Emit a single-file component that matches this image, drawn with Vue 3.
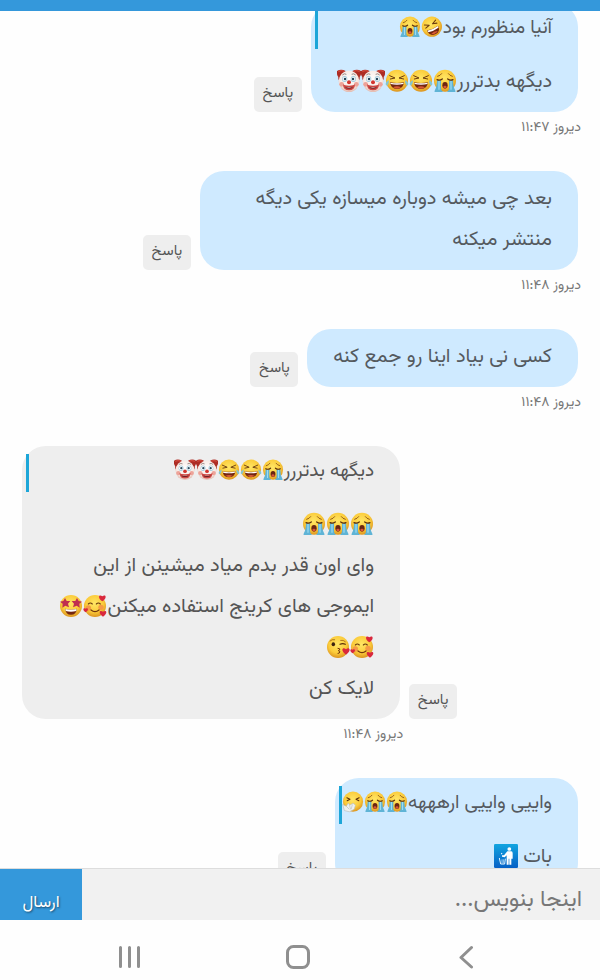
<script setup>
const messages = [
  {
    id: 1,
    mine: true,
    quote: { text: 'آنیا منظورم بود', emojis: ['rofl', 'sob'] },
    lines: [{ text: 'دیگهه بدتررر', emojis: ['sob', 'joy', 'joy', 'clown', 'clown'] }],
    time: 'دیروز ۱۱:۴۷'
  },
  {
    id: 2,
    mine: true,
    lines: [{ text: 'بعد چی میشه دوباره میسازه یکی دیگه منتشر میکنه' }],
    time: 'دیروز ۱۱:۴۸'
  },
  {
    id: 3,
    mine: true,
    lines: [{ text: 'کسی نی بیاد اینا رو جمع کنه' }],
    time: 'دیروز ۱۱:۴۸'
  },
  {
    id: 4,
    mine: false,
    quote: { text: 'دیگهه بدتررر', emojis: ['sob', 'joy', 'joy', 'clown', 'clown'] },
    lines: [
      { text: '', emojis: ['sob', 'sob', 'sob'] },
      {
        text: 'وای اون قدر بدم میاد میشینن از این ایموجی های کرینج استفاده میکنن',
        emojis: ['hearts', 'star', 'hearts', 'kiss']
      },
      { text: 'لایک کن' }
    ],
    time: 'دیروز ۱۱:۴۸'
  },
  {
    id: 5,
    mine: true,
    quote: { text: 'واییی واییی ارهههه', emojis: ['sob', 'sob', 'sneeze'] },
    lines: [{ text: 'بات ', emojis: ['litter'] }],
    time: 'دیروز ۱۱:۴۸'
  }
]

const labels = {
  rofl: '🤣',
  sob: '😭',
  joy: '😂',
  clown: '🤡',
  hearts: '🥰',
  star: '🤩',
  kiss: '😘',
  sneeze: '🤧',
  litter: '🚮'
}
</script>

<template>
  <div class="chat">
    <svg class="sprite" aria-hidden="true">
      <defs>
        <radialGradient id="skin" cx="0.48" cy="0.38" r="0.66">
          <stop offset="0" stop-color="#ffe665" />
          <stop offset="0.6" stop-color="#fbcb3a" />
          <stop offset="1" stop-color="#d68a1c" />
        </radialGradient>
        <radialGradient id="pale" cx="0.5" cy="0.4" r="0.65">
          <stop offset="0" stop-color="#ffffff" />
          <stop offset="0.7" stop-color="#f7e8e2" />
          <stop offset="1" stop-color="#dba99c" />
        </radialGradient>
        <linearGradient id="sign" x1="0" y1="0" x2="0" y2="1">
          <stop offset="0" stop-color="#12a5e0" />
          <stop offset="1" stop-color="#0560c6" />
        </linearGradient>
        <path id="heart" d="M0 5C-8-.5-5-6 0-2.500 5-6 8-.5 0 5z" fill="#d9283c" />
      </defs>

      <symbol id="sob" viewBox="0 0 36 36">
        <circle cx="18" cy="17.500" r="16.500" fill="url(#skin)" />
        <path d="M7 11q4-1 6-4M29 11q-4-1-6-4" fill="none" stroke="#8a5216" stroke-width="1.400" stroke-linecap="round" />
        <path d="M6 17h6v12q0 3 3 5.500H4q-3 0-1-3 3-5 3-14.500zM30 17h-6v12q0 3-3 5.500h11q3 0 1-3-3-5-3-14.500z" fill="#5fb4d6" />
        <path d="M9 18v13M27 18v13" stroke="#9fdcf0" stroke-width="1.800" />
        <path d="M6 16q4 2 8-1M30 16q-4 2-8-1" fill="none" stroke="#5c300b" stroke-width="1.900" stroke-linecap="round" />
        <ellipse cx="18" cy="24.500" rx="4" ry="5" fill="#6b2612" />
        <ellipse cx="18" cy="27" rx="2.500" ry="2" fill="#d9553c" />
      </symbol>

      <symbol id="joy" viewBox="0 0 36 36">
        <circle cx="18" cy="17.500" r="16.500" fill="url(#skin)" />
        <path d="M7 10l8 3.500-7 1.500M29 10l-8 3.500 7 1.500" fill="none" stroke="#6b3b0f" stroke-width="1.500" stroke-linecap="round" stroke-linejoin="round" />
        <path d="M7.500 20q10.500 2 21 0-1 10-10.500 10T7.500 20z" fill="#74260f" />
        <path d="M8 20.500q10 2 20 0l-.5 2q-9.500 2-19 0z" fill="#fff" />
        <path d="M12 27.500q6-3 12 0-6 4-12 0z" fill="#d95a37" />
        <path d="M6 17q-5 2-5 6 1 3 3 1 2-2 2-7zM30 17q5 2 5 6-1 3-3 1-2-2-2-7z" fill="#86c5cf" />
      </symbol>

      <symbol id="rofl" viewBox="0 0 36 36">
        <g transform="rotate(-24 18 18)">
          <circle cx="18" cy="17.500" r="16.500" fill="url(#skin)" />
          <path d="M8 10l7 3.500-7 2M28 10l-7 3.500 7 2" fill="none" stroke="#6b3b0f" stroke-width="1.700" stroke-linecap="round" stroke-linejoin="round" />
          <path d="M8 20q10 2 20 0 0 11-10 11T8 20z" fill="#74260f" />
          <path d="M8.500 20.500q9.500 2 19 0l-.5 3q-9 2-18 0z" fill="#fff" />
          <path d="M12 28q6-3 12 0-6 4-12 0z" fill="#d95a37" />
        </g>
      </symbol>

      <symbol id="clown" viewBox="0 0 36 36">
        <path d="M0 3q6-4 13 0L8 19q-7 0-6-7-3-4-2-9zM36 3q-6-4-13 0l5 16q7 0 6-7 3-4 2-9z" fill="#ad2c24" />
        <path d="M2 4q5-3 9 0M34 4q-5-3-9 0" stroke="#d0473b" stroke-width="2" fill="none" />
        <ellipse cx="18" cy="18.500" rx="15.500" ry="16" fill="url(#pale)" />
        <circle cx="7" cy="23" r="3.500" fill="#eda399" />
        <circle cx="29" cy="23" r="3.500" fill="#eda399" />
        <path d="M8 9q3-3 6-1M28 9q-3-3-6-1" fill="none" stroke="#7e6b68" stroke-width="1.200" />
        <ellipse cx="11.500" cy="15" rx="4" ry="4.500" fill="#a3cde0" />
        <ellipse cx="24.500" cy="15" rx="4" ry="4.500" fill="#a3cde0" />
        <circle cx="11.500" cy="15" r="3" fill="#fff" />
        <circle cx="24.500" cy="15" r="3" fill="#fff" />
        <circle cx="12" cy="15" r="1.900" fill="#29495d" />
        <circle cx="24" cy="15" r="1.900" fill="#29495d" />
        <circle cx="18" cy="20" r="3" fill="#d2352f" />
        <path d="M9 23q2 2 9 2t9-2q0 9-9 9T9 23z" fill="#cc4743" />
        <path d="M12 26.500q6 2 12 0-1 3-6 3t-6-3z" fill="#6b2023" />
        <path d="M13 27q5 1 10 0-5 2-10 0z" fill="#fff" />
      </symbol>

      <symbol id="hearts" viewBox="0 0 36 36">
        <circle cx="18" cy="18" r="16.500" fill="url(#skin)" />
        <circle cx="8" cy="21" r="4" fill="#f59a45" />
        <circle cx="27" cy="20" r="4" fill="#f59a45" />
        <path d="M8 15q3-3 6 0M20 15q3-3 6 0" fill="none" stroke="#6b3b0f" stroke-width="1.600" stroke-linecap="round" />
        <path d="M12 24q6 5 12 0" fill="none" stroke="#70340d" stroke-width="1.800" stroke-linecap="round" />
        <use href="#heart" transform="translate(29 6)" />
        <use href="#heart" transform="translate(4 24) scale(0.700)" />
        <use href="#heart" transform="translate(30 29)" />
      </symbol>

      <symbol id="star" viewBox="0 0 36 36">
        <circle cx="18" cy="18" r="16.500" fill="url(#skin)" />
        <path d="M9 22q9 3 18 0-1 9-9 9T9 22z" fill="#74260f" />
        <path d="M9.500 22.500q8.500 2 17 0l-.5 3q-8 2-16 0z" fill="#fff" />
        <path d="M9 6l2.500 4.500 5.500 0-3.500 4 1.500 5.500-5.500-2.500-4.500 3 .5-6-4-3 5-1zM27 6l-2.500 4.500-5.500 0 3.500 4-1.500 5.500 5.500-2.500 4.500 3-.5-6 4-3-5-1z" fill="#bf2f50" />
      </symbol>

      <symbol id="kiss" viewBox="0 0 36 36">
        <circle cx="18" cy="18" r="16.500" fill="url(#skin)" />
        <path d="M6 9q3-3 7-2M22 8q4-1 7 2" fill="none" stroke="#a4661a" stroke-width="1.300" stroke-linecap="round" />
        <ellipse cx="11" cy="14" rx="2.600" ry="3" fill="#3d2310" />
        <path d="M21 14q4-2 8 0" fill="none" stroke="#5c300b" stroke-width="1.700" stroke-linecap="round" />
        <path d="M18 20q4 0 2.500 2.500l-2 1q4 1 1.500 3.500l-2 .5" fill="none" stroke="#70340d" stroke-width="1.500" stroke-linecap="round" />
        <use href="#heart" transform="translate(30 24) scale(1.100)" />
      </symbol>

      <symbol id="sneeze" viewBox="0 0 36 36">
        <circle cx="18" cy="17.500" r="16.500" fill="url(#skin)" />
        <path d="M8 11l5 2.500-4.500 2.500M28 11l-5 2.500 4.500 2.500" fill="none" stroke="#5c300b" stroke-width="1.800" stroke-linecap="round" stroke-linejoin="round" />
        <path d="M18 20l4 3-2 7-8 4-8-2-3-10 6 3 3-5 3 3z" fill="#eef1f0" stroke="#b7bcb8" stroke-width="1" stroke-linejoin="round" />
        <path d="M7 25l5 5M12 22l2 8M17 22l-2 8" stroke="#b7bcb8" stroke-width="1" />
      </symbol>

      <symbol id="litter" viewBox="0 0 36 36">
        <rect x="0" y="0" width="36" height="36" rx="2" fill="url(#sign)" />
        <circle cx="23" cy="7.500" r="2.800" fill="#fff" />
        <path d="M20 11h6q2 0 2 3v8h-2v9h-3v-9h-1v9h-3V17l-3 3-4-1v-2l3 0z" fill="#fff" />
        <path d="M8 21l2 9h6l1-8" fill="none" stroke="#e6f5ff" stroke-width="1.500" />
        <path d="M12 23v6M14 23v6" stroke="#e6f5ff" stroke-width="1" />
        <path d="M11 14l1 1" stroke="#fff" stroke-width="2" />
      </symbol>
    </svg>

    <header class="topbar"></header>

    <main class="thread" dir="rtl">
      <ul class="list">
        <li v-for="m in messages" :key="m.id" class="message" :class="m.mine ? 'mine' : 'theirs'">
          <div class="bubble">
            <blockquote v-if="m.quote" class="quote">
              {{ m.quote.text
              }}<svg v-for="(e, i) in m.quote.emojis" :key="i" class="emoji" role="img" :aria-label="labels[e]">
                <use :href="'#' + e" />
              </svg>
            </blockquote>
            <p v-for="(line, n) in m.lines" :key="n" class="line">
              {{ line.text
              }}<svg v-for="(e, i) in line.emojis" :key="i" class="emoji" role="img" :aria-label="labels[e]">
                <use :href="'#' + e" />
              </svg>
            </p>
          </div>
          <button type="button" class="reply">پاسخ</button>
          <time class="time">{{ m.time }}</time>
        </li>
      </ul>
    </main>

    <form class="composer" dir="rtl" @submit.prevent>
      <input class="field" type="text" placeholder="اینجا بنویس..." aria-label="اینجا بنویس..." />
      <button type="submit" class="send">ارسال</button>
    </form>

    <nav class="system">
      <button type="button" class="key" aria-label="Recents">
        <svg viewBox="0 0 24 24"><path d="M2.500 2.500v19M11.500 2.500v19M20.500 2.500v19" /></svg>
      </button>
      <button type="button" class="key" aria-label="Home">
        <svg viewBox="0 0 24 24"><rect x="1.500" y="1.500" width="21" height="21" rx="6" /></svg>
      </button>
      <button type="button" class="key" aria-label="Back">
        <svg viewBox="0 0 24 24"><path d="M17.500 2.500L7 12.500 17.500 22" /></svg>
      </button>
    </nav>
  </div>
</template>

<style>
body {
  background: #fff;
}
</style>

<style scoped>
.chat {
  display: flex;
  flex-direction: column;
  height: 100vh;
  overflow: hidden;
  background: #fefefe;
  color: #555a5f;
  font-family: Vazirmatn, "Noto Sans Arabic", "DejaVu Sans", sans-serif;
}
.sprite {
  position: absolute;
  width: 0;
  height: 0;
}
.topbar {
  flex: none;
  height: 11px;
  background: #3498db;
}
.thread {
  flex: 1;
  min-height: 0;
  overflow: hidden;
}
.list {
  list-style: none;
  margin: -8px 0 0;
  padding: 0 22px;
}
.message {
  display: grid;
  column-gap: 9px;
  align-items: end;
  margin-bottom: 33px;
}
.mine {
  grid-template-columns: fit-content(68%) auto;
  grid-template-areas: "bubble reply" "time .";
  justify-content: start;
}
.theirs {
  grid-template-columns: auto fit-content(68%);
  grid-template-areas: "reply bubble" ". time";
  justify-content: end;
}
.bubble {
  grid-area: bubble;
  padding: 8px 26px 9px;
  border-radius: 24px;
  background: #cfeaff;
}
.theirs .bubble {
  background: #eee;
  color: #555;
}
.quote {
  margin: 0 0 13px -22px;
  border-left: 3px solid #1da6d8;
  font-size: 19px;
  line-height: 36px;
  height: 38px;
  white-space: nowrap;
}
.line {
  margin: 0;
  font-size: 20px;
  line-height: 41px;
}
.emoji {
  width: 24px;
  height: 24px;
  vertical-align: -6px;
}
.quote .emoji {
  width: 22px;
  height: 22px;
  vertical-align: -5px;
}
.reply {
  grid-area: reply;
  height: 35px;
  width: 48px;
  padding: 0 0 3px;
  border: 0;
  border-radius: 5px;
  background: #eee;
  color: #555;
  font-family: inherit;
  font-size: 15px;
}
.time {
  grid-area: time;
  margin-right: -3px;
  padding-top: 6px;
  font-size: 14px;
  line-height: 20px;
  color: #777;
}
.composer {
  flex: none;
  display: flex;
  height: 51px;
  border-top: 1px solid #ddd;
  background: #f1f1f1;
}
.field {
  flex: 1;
  min-width: 0;
  padding: 10px 18px 0;
  border: 0;
  outline: 0;
  background: transparent;
  color: #555;
  font-family: inherit;
  font-size: 23px;
}
.field::placeholder {
  color: #777;
  opacity: 1;
}
.send {
  width: 82px;
  padding: 16px 0 0;
  border: 0;
  background: #3498db;
  color: #fff;
  font-family: inherit;
  font-size: 17px;
  text-shadow: 1px 1px 2px #00000080;
}
.system {
  flex: none;
  display: flex;
  height: 60px;
  padding: 0 50px 0 46px;
  background: #fefefe;
}
.key {
  flex: 1;
  display: grid;
  place-items: center;
  padding: 14px 0 0;
  border: 0;
  background: none;
}
.key svg {
  width: 24px;
  height: 24px;
  fill: none;
  stroke: #8f8f8f;
  stroke-width: 3;
  stroke-linecap: round;
  stroke-linejoin: round;
}
</style>
